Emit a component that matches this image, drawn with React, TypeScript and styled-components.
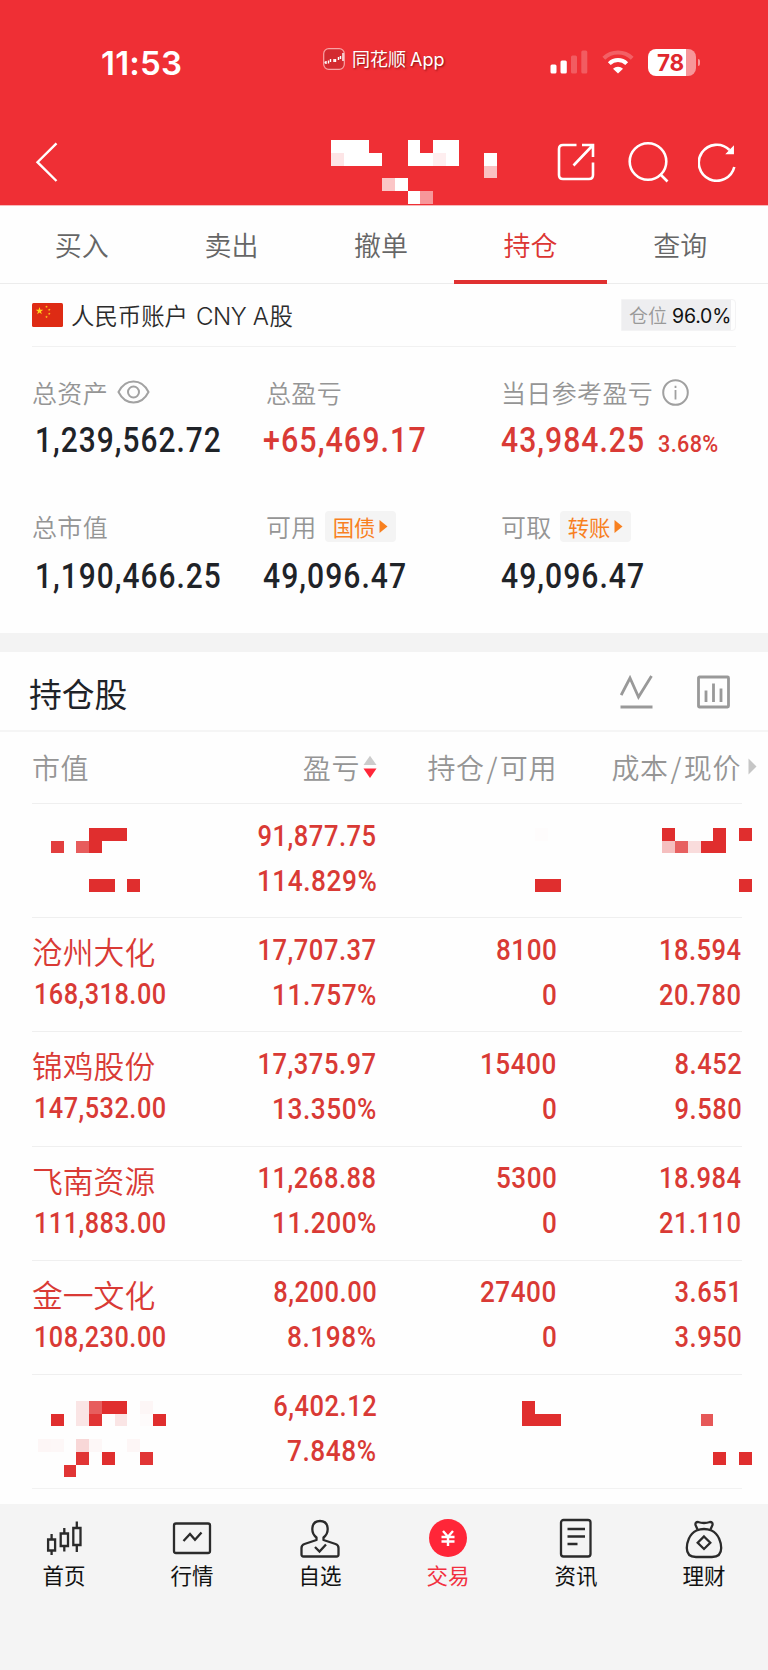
import React from "react";
import styled, { createGlobalStyle } from "styled-components";

const RED = "#d93a35";
const INK = "#1f2328";
const GREY = "#959595";
const CELL = 12.74;

const GlobalStyle = createGlobalStyle`
  * { box-sizing: border-box; }
  body {
    margin: 0;
    background: #f4f4f4;
    font-family: "Noto Sans CJK SC", sans-serif;
    -webkit-font-smoothing: antialiased;
  }
`;

const Screen = styled.div`
  width: 768px;
  height: 1670px;
  overflow: hidden;
  display: flex;
  flex-direction: column;
  background: #fefefe;
`;

/* ---------- header ---------- */

const Header = styled.header`
  position: relative;
  height: 206px;
  flex: none;
  background: #ef2f35;
  border-bottom: 1px solid #f7b9ba;
`;

const StatusBar = styled.div`
  display: flex;
  align-items: center;
  height: 124px;
`;

const Clock = styled.div`
  width: 222px;
  padding: 1px 0 0 101px;
  color: #fff;
  font: 600 33px/40px Inter, sans-serif;
  letter-spacing: 0.2px;
`;

const AppTag = styled.div`
  display: flex;
  align-items: center;
  gap: 8px;
  width: 328px;
  padding: 0 0 6px 101px;
  color: #fff;
  font-size: 18px;
  line-height: 24px;
  white-space: nowrap;
  text-shadow: 1px 1px 2px rgba(90, 0, 0, 0.7);
`;

const AppName = styled.span`
  margin: -2px 0 0 -1px;
  b {
    margin-left: 4px;
    font: 400 18px Inter, sans-serif;
  }
`;

const StatusIcons = styled.div`
  display: flex;
  align-items: center;
  gap: 14px;
`;

const Battery = styled.div`
  position: relative;
  width: 48px;
  height: 27px;
  padding-left: 9px;
  border-radius: 8px;
  background: linear-gradient(90deg, #fff 38px, #f79699 38px);
  color: #e0282e;
  font: 650 22.5px/27px Inter, sans-serif;
  letter-spacing: -0.3px;
  &::after {
    content: "";
    position: absolute;
    right: -4px;
    top: 10px;
    width: 2.5px;
    height: 7px;
    border-radius: 0 3px 3px 0;
    background: #f79699;
  }
`;

const NavBar = styled.div`
  display: flex;
  justify-content: space-between;
  align-items: center;
  height: 75px;
  padding: 0 32px 0 35px;
`;

const NavActions = styled.div`
  display: flex;
  align-items: center;
  svg + svg {
    margin-left: 33px;
  }
  svg:last-child {
    margin-left: 28px;
  }
`;

/* ---------- tabs ---------- */

const Tabs = styled.nav`
  display: flex;
  flex: none;
  height: 78px;
  padding: 0 13px 0 7px;
  border-bottom: 1px solid #ececec;
`;

const Tab = styled.div<{ $active?: boolean }>`
  position: relative;
  flex: 1;
  text-align: center;
  color: ${(p) => (p.$active ? "#dc3532" : "#666")};
  font-size: 27px;
  font-weight: 350;
  line-height: 78px;
  height: 78px;
  &::after {
    content: "";
    display: ${(p) => (p.$active ? "block" : "none")};
    position: absolute;
    left: -2px;
    right: -2px;
    bottom: 0;
    height: 4px;
    background: #e03131;
  }
`;

/* ---------- account ---------- */

const Account = styled.div`
  display: flex;
  align-items: center;
  flex: none;
  height: 63px;
  margin: 0 32px;
  border-bottom: 1px solid #f1f1f1;
`;

const AccountName = styled.div`
  flex: 1;
  padding-left: 8px;
  color: #2b2b2b;
  font-size: 23.4px;
  font-weight: 350;
  white-space: nowrap;
`;

const Latin = styled.span`
  margin: 0 1px 0 8px;
  font-family: Inter, sans-serif;
  font-size: 24px;
  font-weight: 330;
  letter-spacing: -0.4px;
`;

const PositionChip = styled.div`
  display: flex;
  align-items: center;
  gap: 5px;
  width: 115px;
  height: 32px;
  padding-left: 7px;
  border: 1px solid #f3f3f4;
  border-radius: 0 4px 4px 0;
  background: linear-gradient(90deg, #eeeef0 109px, #fefefe 109px);
  color: #999;
  font-size: 19px;
  line-height: 32px;
  font-weight: 350;
  white-space: nowrap;
  span {
    margin-top: 2px;
    color: #111;
    font: 400 19.5px/30px Inter, sans-serif;
    letter-spacing: -0.2px;
  }
`;

/* ---------- summary ---------- */

const Summary = styled.section`
  display: grid;
  grid-template-columns: 234px 235px 1fr;
  grid-auto-rows: 134px;
  flex: none;
  height: 286px;
  padding: 27px 0 0 32px;
`;

const Label = styled.div`
  display: flex;
  align-items: center;
  height: 36px;
  color: ${GREY};
  font-size: 25px;
  font-weight: 350;
  letter-spacing: 0.35px;
  white-space: nowrap;
  svg {
    margin-left: 9px;
  }
`;

const Amounts = styled.div<{ $offset?: number; $drop?: number }>`
  display: flex;
  align-items: baseline;
  height: 58px;
  margin: ${(p) => p.$drop ?? 1}px 0 0 ${(p) => p.$offset ?? 0}px;
`;

const Num = styled.span<{ $size: number; $color?: string; $scale?: number; $spacing?: number; $weight?: number; $line: number; $right?: boolean }>`
  display: inline-block;
  transform: scaleX(${(p) => p.$scale ?? 0.86});
  transform-origin: ${(p) => (p.$right ? "right" : "left")} center;
  color: ${(p) => p.$color ?? RED};
  font-family: Roboto, sans-serif;
  font-weight: ${(p) => p.$weight ?? 550};
  font-size: ${(p) => p.$size}px;
  line-height: ${(p) => p.$line}px;
  letter-spacing: ${(p) => p.$spacing ?? 1.2}px;
  white-space: nowrap;
`;

const DayRate = styled.div`
  margin-left: -11px;
`;

const Chip = styled.span`
  display: flex;
  align-items: center;
  gap: 4px;
  height: 31px;
  width: 71px;
  margin-left: 8px;
  padding-left: 8px;
  border-radius: 4px;
  background: #f4f4f4;
  color: #f8801f;
  font-size: 21.3px;
  font-weight: 400;
  letter-spacing: 0;
  svg {
    margin: 0;
  }
`;

const Divider = styled.div`
  flex: none;
  height: 19px;
  background: #f3f3f3;
`;

/* ---------- holdings ---------- */

const SectionHead = styled.div`
  display: flex;
  align-items: center;
  flex: none;
  height: 80px;
  padding: 0 38px 0 29px;
  border-bottom: 2px solid #f5f5f5;
`;

const SectionTitle = styled.h2`
  flex: 1;
  margin: 3px 0 0;
  color: ${INK};
  font-size: 32.8px;
  line-height: 40px;
  font-weight: 430;
`;

const SectionIcons = styled.div`
  display: flex;
  gap: 44px;
  margin-top: 2px;
`;

const COLUMNS = "180px 164px 180px 185px";

const TableHead = styled.div`
  display: grid;
  grid-template-columns: ${COLUMNS};
  flex: none;
  height: 71px;
  padding: 0 0 0 32px;
  color: ${GREY};
  font-size: 28px;
  font-weight: 350;
  letter-spacing: 0.6px;
  line-height: 68px;
`;

const HeadCell = styled.div<{ $shift?: number }>`
  display: flex;
  justify-content: ${(p) => (p.$shift === undefined ? "flex-start" : "flex-end")};
  align-items: center;
  gap: 3px;
  height: 69px;
  margin-right: ${(p) => p.$shift ?? 0}px;
  white-space: nowrap;
  i {
    margin: 0 1.8px;
    font-style: normal;
  }
  span + svg {
    margin-left: 4px;
  }
`;

const Row = styled.div`
  position: relative;
  display: grid;
  grid-template-columns: ${COLUMNS};
  flex: none;
  height: 114.2px;
  padding: 10px 0 0 32px;
  &::before {
    content: "";
    position: absolute;
    left: 32px;
    right: 26px;
    top: 0;
    height: 1px;
    background: #efefef;
  }
`;

const Cell = styled.div`
  display: flex;
  flex-direction: column;
  align-items: flex-end;
  margin-right: -1px;
  padding-top: 0.5px;
`;

const NameCell = styled.div`
  display: flex;
  flex-direction: column;
  align-items: flex-start;
`;

const StockValue = styled.div`
  padding-left: 2px;
`;

const StockName = styled.div`
  height: 52px;
  color: ${RED};
  font-size: 30.8px;
  font-weight: 350;
  line-height: 48px;
  white-space: nowrap;
`;

const MosaicLayer = styled.svg`
  position: absolute;
  left: 0;
  top: 0;
  pointer-events: none;
`;

const ListEnd = styled.div`
  flex: 1;
  margin: 0 26px 0 32px;
  border-top: 1px solid #f2f2f2;
`;

/* ---------- bottom bar ---------- */

const BottomBar = styled.nav`
  display: flex;
  flex: none;
  height: 166px;
  background: #f4f4f4;
`;

const BarItem = styled.div<{ $active?: boolean }>`
  display: flex;
  flex: 1;
  flex-direction: column;
  align-items: center;
  padding-top: 13px;
  color: ${(p) => (p.$active ? "#f2303f" : "#111")};
  font-size: 21.5px;
  line-height: 30px;
  svg {
    display: block;
    margin-bottom: 1px;
  }
`;

/* ---------- drawings ---------- */

type MosaicCell = [col: number, row: number, opacity?: number];

const Mosaic = ({ cells, color, height, top }: {
  cells: MosaicCell[]; color: string; height: number; top: number;
}) => (
  <MosaicLayer width="768" height={height} fill={color} shapeRendering="crispEdges">
    {cells.map(([c, r, o = 1]) => (
      <rect key={`${c}-${r}`} x={c * CELL} y={top + r * CELL} width={CELL} height={CELL} opacity={o} />
    ))}
  </MosaicLayer>
);

const TITLE_CELLS: MosaicCell[] = [
  [26, 11], [27, 11], [28, 11], [32, 11], [34, 11], [35, 11],
  [26, 12, 0.88], [27, 12], [28, 12], [29, 12], [32, 12], [33, 12], [34, 12, 0.92], [35, 12], [38, 12],
  [38, 13, 0.7], [30, 14, 0.72], [31, 14], [32, 15], [33, 15, 0.5],
];

const FIRST_CELLS: MosaicCell[] = [
  [7, 0], [8, 0], [9, 0], [52, 0], [56, 0], [58, 0], [42, 0, 0.012],
  [4, 1, 0.92], [6, 1, 0.78], [7, 1], [52, 1, 0.3], [53, 1, 0.76], [54, 1, 0.16], [55, 1], [56, 1],
  [7, 4], [8, 4], [10, 4], [42, 4], [43, 4], [58, 4],
];

const LAST_CELLS: MosaicCell[] = [
  [6, 0, 0.12], [7, 0, 0.77], [8, 0], [9, 0], [11, 0, 0.04], [41, 0],
  [4, 1], [6, 1, 0.12], [7, 1, 0.97], [9, 1, 0.12], [11, 1, 0.015], [12, 1], [41, 1], [42, 1], [43, 1], [55, 1, 0.8],
  [3, 3, 0.04], [4, 3, 0.03], [6, 3, 0.19], [7, 3, 0.03], [10, 3, 0.04],
  [6, 4, 0.97], [8, 4], [11, 4, 0.97], [56, 4], [58, 4], [5, 5, 0.97],
];

const AppGlyph = () => (
  <svg width="22" height="22" viewBox="0 0 22 22" fill="none">
    <rect x="0.7" y="0.7" width="20.6" height="20.6" rx="5" fill="#d32a30" stroke="#f9a3a5" strokeWidth="1.2" />
    <path d="M1.5 14.5h2M3 13v3M5.5 12.5v3M7.5 11v3M11 11v3M12.5 11v3M15.500 9v3M17.500 8v3M20 5v8" stroke="#fff" strokeWidth="1.4" />
  </svg>
);

const Signal = () => (
  <svg width="38" height="24" viewBox="0 0 38 24" fill="#fff">
    <rect x="0.500" y="14.500" width="6" height="9" rx="1.500" />
    <rect x="10.500" y="10.500" width="6.300" height="13" rx="1.500" />
    <rect x="21" y="5.500" width="6" height="18" rx="1.500" opacity="0.22" />
    <rect x="31.300" y="0.500" width="6" height="23" rx="1.500" opacity="0.22" />
  </svg>
);

const Wifi = () => (
  <svg width="32" height="24" viewBox="0 0 32 24" fill="none" stroke="#fff" strokeWidth="4">
    <path d="M1.800 8.300A20.500 20.500 0 0 1 30.200 8.300" opacity="0.24" />
    <path d="M7.300 13.600A12.500 12.500 0 0 1 24.700 13.600" />
    <path d="M16 23.500L11 18.700A7.200 7.200 0 0 1 21 18.700Z" fill="#fff" stroke="none" />
  </svg>
);

const Back = () => (
  <svg width="25" height="42" viewBox="0 0 25 42" fill="none" stroke="#fff" strokeWidth="2.400">
    <path d="M21.500 2.300L2.500 21.200L21.500 40" />
  </svg>
);

const Share = () => (
  <svg width="38" height="38" viewBox="0 0 38 38" fill="none" stroke="#fff" strokeWidth="2.600">
    <path d="M19.500 2H6Q2 2 2 6V32Q2 36 6 36H32Q36 36 36 32V19.500" />
    <path d="M25 2H36V14M35.500 2.500L16.500 22.500" />
  </svg>
);

const Search = () => (
  <svg width="42" height="42" viewBox="0 0 42 42" fill="none" stroke="#fff" strokeWidth="2.600">
    <circle cx="20" cy="20.500" r="18.300" />
    <path d="M32 33L39.500 40.500" />
  </svg>
);

const Refresh = () => (
  <svg width="38" height="40" viewBox="0 0 38 40" fill="none" stroke="#fff" strokeWidth="2.600">
    <path d="M36.300 25A18 18 0 1 1 31.500 8" />
    <path d="M35.200 5V11.500H29Z" fill="#fff" strokeWidth="1.500" />
  </svg>
);

const STAR = "M0-1L.225-.309L.951-.309L.363.118L.588.809L0 .382L-.588.809L-.363.118L-.951-.309L-.225-.309Z";

const Flag = () => (
  <svg width="31" height="24" viewBox="0 0 31 24">
    <rect width="31" height="24" rx="1.500" fill="#de2b14" />
    <g fill="#ffd21e">
      <path transform="translate(7.500 8) scale(4)" d={STAR} />
      <path transform="translate(14.500 3.800) scale(1.400)" d={STAR} />
      <path transform="translate(17.300 6.800) scale(1.400)" d={STAR} />
      <path transform="translate(17.300 10.800) scale(1.400)" d={STAR} />
      <path transform="translate(14.500 14) scale(1.400)" d={STAR} />
    </g>
  </svg>
);

const Eye = () => (
  <svg width="33" height="24" viewBox="0 0 33 24" fill="none" stroke="#a2a2a2" strokeWidth="2">
    <path d="M1.500 12C5 5 10 1.500 16.500 1.500S28 5 31.500 12C28 19 23 22.500 16.500 22.500S5 19 1.500 12Z" />
    <circle cx="16.500" cy="12" r="5.500" />
  </svg>
);

const Info = () => (
  <svg width="27" height="27" viewBox="0 0 27 27" fill="none" stroke="#a0a0a0" strokeWidth="2">
    <circle cx="13.500" cy="13.500" r="12.300" />
    <path d="M13.500 11V20.500M13.500 6.800V9" strokeWidth="1.800" />
  </svg>
);

const Triangle = () => (
  <svg width="9" height="15" viewBox="0 0 9 15"><path d="M0.500 1V14L8.500 7.500Z" fill="#f8801f" /></svg>
);

const TrendIcon = () => (
  <svg width="33" height="34" viewBox="0 0 33 34" fill="none" stroke="#999" strokeWidth="2.800">
    <path d="M1.200 20L10 3L18.500 22L31.500 1M0.500 32H32.500" />
  </svg>
);

const BarsIcon = () => (
  <svg width="33" height="34" viewBox="0 0 33 34" fill="none" stroke="#999" strokeWidth="2.800">
    <rect x="1.500" y="2" width="30" height="30" rx="1" />
    <path d="M9 15.500V27M16.500 8.500V27M24 13.500V27" />
  </svg>
);

const SortIcon = () => (
  <svg width="14" height="24" viewBox="0 0 14 24">
    <path d="M0.500 10L7 0.800L13.500 10Z" fill="#ccc" />
    <path d="M0.500 13.500H13.500L7 23Z" fill="#ff2638" />
  </svg>
);

const NextIcon = () => (
  <svg width="9" height="17" viewBox="0 0 9 17"><path d="M0.500 0.500V16.500L8.500 8.500Z" fill="#c6c6c6" /></svg>
);

const barIcon = { width: 40, height: 42, viewBox: "0 0 40 42", fill: "none", stroke: "#2b2b2b", strokeWidth: 2.3 };

const HomeIcon = () => (
  <svg {...barIcon}>
    <path d="M7.600 17V22.500M7.600 33.500V38M20.300 11V16.500M20.300 28.500V34.500M32.800 4.500V11M32.800 28V35" />
    <path d="M4.100 22.500H11.100V33.500H4.100ZM16.700 16.500H24V29H16.700ZM29.300 11H36.500V28H29.300Z" />
  </svg>
);

const MarketIcon = () => (
  <svg {...barIcon}>
    <rect x="2" y="6.500" width="36" height="29.500" rx="2" />
    <path d="M11.500 24L18 17L23 22.800L29.500 15.500" />
  </svg>
);

const WatchIcon = () => (
  <svg {...barIcon}>
    <path d="M16.500 20.500C10.500 16 10.500 4 20 4S29.500 16 23.500 20.500V23L35.500 27Q38.500 28 38.500 31V37.500Q38.500 39.500 36.500 39.500H3.500Q1.500 39.500 1.500 37.500V31Q1.500 28 4.500 27L16.500 23Z" strokeLinejoin="round" />
    <path d="M15 30L19.500 34.500L26 27.500" />
  </svg>
);

const TradeIcon = () => (
  <svg {...barIcon} stroke="#fff">
    <circle cx="20" cy="21" r="19" fill="#ff2638" stroke="none" />
    <path d="M15 14L20 19.700L25 14M20 19.500V29M13.500 20H26.500M13.500 24.500H26.500" strokeWidth="2.400" />
  </svg>
);

const NewsIcon = () => (
  <svg {...barIcon}>
    <rect x="5" y="3" width="29.500" height="36.500" rx="2.500" />
    <path d="M11.500 12H29M11.500 19.500H29M11.500 27H21.500" />
  </svg>
);

const WealthIcon = () => (
  <svg {...barIcon}>
    <path d="M13.500 12.500L11.500 8Q11 5 14 5Q20 7 26 5Q29 5 28.500 8L26.500 12.500" />
    <path d="M12.500 13.500C5 17 2.800 26 2.800 31Q2.800 40 12 40H28Q37.200 40 37.200 31C37.200 26 35 17 27.500 13.500Q20 10.500 12.500 13.500Z" />
    <path d="M20 19.500L26.300 25.800L20 32L13.700 25.800Z" />
  </svg>
);

/* ---------- data ---------- */

interface Holding {
  name?: string;
  value?: string;
  profit: [string, string];
  position?: [string, string];
  price?: [string, string];
  cells?: MosaicCell[];
  cellsTop?: number;
}

const HOLDINGS: Holding[] = [
  { profit: ["91,877.75", "114.829%"], cells: FIRST_CELLS, cellsTop: 25 },
  { name: "沧州大化", value: "168,318.00", profit: ["17,707.37", "11.757%"], position: ["8100", "0"], price: ["18.594", "20.780"] },
  { name: "锦鸡股份", value: "147,532.00", profit: ["17,375.97", "13.350%"], position: ["15400", "0"], price: ["8.452", "9.580"] },
  { name: "飞南资源", value: "111,883.00", profit: ["11,268.88", "11.200%"], position: ["5300", "0"], price: ["18.984", "21.110"] },
  { name: "金一文化", value: "108,230.00", profit: ["8,200.00", "8.198%"], position: ["27400", "0"], price: ["3.651", "3.950"] },
  { profit: ["6,402.12", "7.848%"], cells: LAST_CELLS, cellsTop: 27 },
];

const BAR_ITEMS = [
  { label: "首页", Icon: HomeIcon },
  { label: "行情", Icon: MarketIcon },
  { label: "自选", Icon: WatchIcon },
  { label: "交易", Icon: TradeIcon, active: true },
  { label: "资讯", Icon: NewsIcon },
  { label: "理财", Icon: WealthIcon },
];

const NumberPair = ({ pair, scale = 0.865 }: { pair?: [string, string]; scale?: number }) => (
  <Cell>
    {pair?.map((text, i) => (
      <Num key={i} $size={29.5} $line={45} $right $scale={text.endsWith("%") ? 0.89 : scale} $spacing={0.6}>{text}</Num>
    ))}
  </Cell>
);

const HoldingRow = ({ name, value, profit, position, price, cells, cellsTop = 0 }: Holding) => (
  <Row>
    <NameCell>
      {name && <StockName>{name}</StockName>}
      {value && <StockValue><Num $size={29.5} $line={31} $scale={0.856} $spacing={0.6}>{value}</Num></StockValue>}
    </NameCell>
    <NumberPair pair={profit} />
    <NumberPair pair={position} scale={0.885} />
    <NumberPair pair={price} />
    {cells && <Mosaic cells={cells} color="#e02e2e" height={114} top={cellsTop} />}
  </Row>
);

export default function App() {
  return (
    <>
      <GlobalStyle />
      <Screen>
        <Header>
          <StatusBar>
            <Clock>11:53</Clock>
            <AppTag><AppGlyph /><AppName>同花顺<b>App</b></AppName></AppTag>
            <StatusIcons><Signal /><Wifi /><Battery>78</Battery></StatusIcons>
          </StatusBar>
          <NavBar>
            <Back />
            <NavActions><Share /><Search /><Refresh /></NavActions>
          </NavBar>
          <Mosaic cells={TITLE_CELLS} color="#fff" height={205} top={0} />
        </Header>

        <Tabs>
          <Tab>买入</Tab>
          <Tab>卖出</Tab>
          <Tab>撤单</Tab>
          <Tab $active>持仓</Tab>
          <Tab>查询</Tab>
        </Tabs>

        <Account>
          <Flag />
          <AccountName>人民币账户<Latin>CNY A</Latin>股</AccountName>
          <PositionChip>仓位<span>96.0%</span></PositionChip>
        </Account>

        <Summary>
          <div>
            <Label>总资产<Eye /></Label>
            <Amounts $offset={3}><Num $size={35} $line={60} $scale={0.854} $color={INK}>1,239,562.72</Num></Amounts>
          </div>
          <div>
            <Label>总盈亏</Label>
            <Amounts $offset={-3}><Num $size={35} $line={60} $scale={0.87}>+65,469.17</Num></Amounts>
          </div>
          <div>
            <Label>当日参考盈亏<Info /></Label>
            <Amounts>
              <Num $size={35} $line={60}>43,984.25</Num>
              <DayRate><Num $size={24} $line={60} $scale={0.9} $spacing={0.4} $weight={500}>3.68%</Num></DayRate>
            </Amounts>
          </div>
          <div>
            <Label>总市值</Label>
            <Amounts $drop={3} $offset={3}><Num $size={35} $line={60} $scale={0.854} $color={INK}>1,190,466.25</Num></Amounts>
          </div>
          <div>
            <Label>可用<Chip>国债<Triangle /></Chip></Label>
            <Amounts $drop={3} $offset={-3}><Num $size={35} $line={60} $color={INK}>49,096.47</Num></Amounts>
          </div>
          <div>
            <Label>可取<Chip>转账<Triangle /></Chip></Label>
            <Amounts $drop={3}><Num $size={35} $line={60} $color={INK}>49,096.47</Num></Amounts>
          </div>
        </Summary>

        <Divider />

        <SectionHead>
          <SectionTitle>持仓股</SectionTitle>
          <SectionIcons><TrendIcon /><BarsIcon /></SectionIcons>
        </SectionHead>

        <TableHead>
          <HeadCell>市值</HeadCell>
          <HeadCell $shift={-1}>盈亏<SortIcon /></HeadCell>
          <HeadCell $shift={-1}><span>持仓<i>/</i>可用</span></HeadCell>
          <HeadCell $shift={-16}><span>成本<i>/</i>现价</span><NextIcon /></HeadCell>
        </TableHead>

        {HOLDINGS.map((h) => <HoldingRow key={h.profit[0]} {...h} />)}
        <ListEnd />

        <BottomBar>
          {BAR_ITEMS.map(({ label, Icon, active }) => (
            <BarItem key={label} $active={active}><Icon />{label}</BarItem>
          ))}
        </BottomBar>
      </Screen>
    </>
  );
}
